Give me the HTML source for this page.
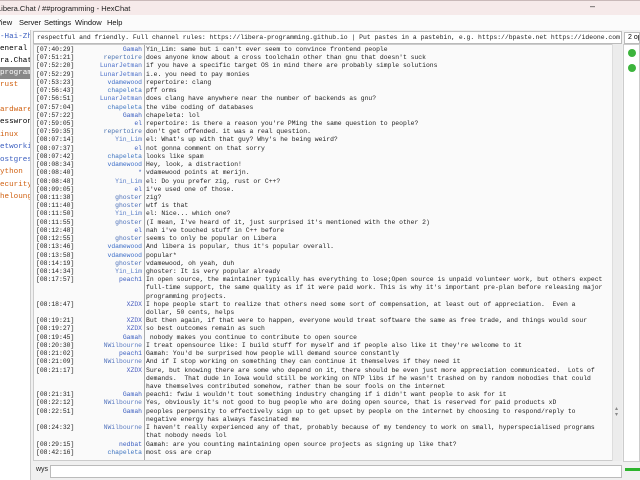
<!DOCTYPE html>
<html><head><meta charset="utf-8"><style>
*{margin:0;padding:0;box-sizing:border-box}
body{width:640px;height:480px;overflow:hidden;background:#f0f0f0;font-family:"Liberation Sans",sans-serif;position:relative}
.title{position:absolute;left:0;top:0;width:640px;height:15px;background:#f6eaea;font-size:7.5px;line-height:15px;color:#222;border-top:1px solid #c9b9b9;white-space:nowrap}
.menu{position:absolute;left:0;top:15px;width:640px;height:15px;background:#fbfbfb;font-size:7.5px;line-height:15px;color:#111}
.mi{position:absolute;top:0;display:block;white-space:nowrap}
.tree{position:absolute;left:0;top:30px;width:31px;height:450px;background:#fff;border-right:1px solid #ccc;font-family:"Liberation Mono",monospace;font-size:7.6px;overflow:hidden}
.tree div{position:absolute;left:0;white-space:nowrap;height:12px;line-height:12px}
.topic{position:absolute;left:33px;top:31px;width:589px;height:13px;background:#fff;border:1px solid #bbb;font-family:"Liberation Mono",monospace;font-size:6.4px;line-height:12px;white-space:nowrap;overflow:hidden;padding-left:3px;color:#222}
.chat{position:absolute;left:33px;top:44px;width:580px;height:417px;background:#fafafa;border:1px solid #ccc;overflow:hidden}
.sb{position:absolute;left:612px;top:44px;width:10px;height:417px;background:#ececec;border-left:1px solid #ddd}
.sep{position:absolute;left:144px;top:45px;width:1px;height:415px;background:#aaa}
.rows{position:absolute;left:0;top:46px;font-family:"Liberation Mono",monospace;font-size:6.4px;color:#222}
.r{position:absolute;height:8px;line-height:8px;white-space:pre}
.t{left:36px}
.m{left:146px}
.users{position:absolute;left:623px;top:44px;width:17px;height:418px;background:#fff;border:1px solid #ccc}
.inp{position:absolute;left:50px;top:465px;width:572px;height:13px;background:#fff;border:1px solid #bbb}
</style></head><body>
<div class="title"><span style="position:absolute;left:-3px">Libera.Chat / ##programming - HexChat</span><span style="position:absolute;left:590px;top:-2px;font-size:9px">–</span></div>
<div class="menu"><span class="mi" style="left:-4px">View</span><span class="mi" style="left:19px">Server</span><span class="mi" style="left:44px">Settings</span><span class="mi" style="left:75px">Window</span><span class="mi" style="left:107px">Help</span></div>
<div class="tree">
<div style="top:1px;color:#3a5dbf">-Hai-Zhan</div>
<div style="top:13px">eneral</div>
<div style="top:25px">ra.Chat</div>
<div style="top:37px;background:#888;color:#fff;width:31px">programm</div>
<div style="top:49px;color:#d06010">rust</div>
<div style="top:74px;color:#d06010">ardware</div>
<div style="top:86px">esswrong</div>
<div style="top:99px;color:#d06010">inux</div>
<div style="top:111px;color:#3a5dbf">etworkin</div>
<div style="top:124px;color:#3a5dbf">ostgresq</div>
<div style="top:136px;color:#d06010">ython</div>
<div style="top:149px;color:#d06010">ecurity</div>
<div style="top:161px;color:#d06010">helounge</div>
</div>
<div class="topic">respectful and friendly. Full channel rules: https://libera-programming.github.io | Put pastes in a pastebin, e.g. https://bpaste.net https://ideone.com</div>
<div style="position:absolute;left:624px;top:32px;width:16px;height:12px;background:#fff;border:1px solid #bbb;font-size:7px;line-height:10px;padding-left:3px;overflow:hidden;white-space:nowrap">2 op</div>
<div class="chat"></div>
<div class="sb"><div style="position:absolute;left:2px;top:362px;font-size:6px;color:#888;line-height:6px">▴<br>▾</div></div>
<div class="sep"></div>
<div class="users">
<div style="position:absolute;left:4px;top:4px;width:8px;height:8px;border-radius:50%;background:#3cb43c"></div>
<div style="position:absolute;left:4px;top:19px;width:8px;height:8px;border-radius:50%;background:#3cb43c"></div>
</div>
<div style="position:absolute;left:625px;top:468px;width:15px;height:3px;background:#2db42d"></div>
<div style="position:absolute;left:36px;top:466px;font-size:7px;color:#222">wys</div>
<div class="inp"></div>
<div class="rows" id="rows"></div>
<script>
var L=[
["07:40:29","Gamah","Yin_Lim: same but i can't ever seem to convince frontend people"],
["07:51:21","repertoire","does anyone know about a cross toolchain other than gnu that doesn't suck"],
["07:52:20","LunarJetman","if you have a specific target OS in mind there are probably simple solutions"],
["07:52:29","LunarJetman","i.e. you need to pay monies"],
["07:53:23","vdamewood","repertoire: clang"],
["07:56:43","chapeleta","pff orms"],
["07:56:51","LunarJetman","does clang have anywhere near the number of backends as gnu?"],
["07:57:04","chapeleta","the vibe coding of databases"],
["07:57:22","Gamah","chapeleta: lol"],
["07:59:05","el","repertoire: is there a reason you're PMing the same question to people?"],
["07:59:35","repertoire","don't get offended. it was a real question."],
["08:07:14","Yin_Lim","el: What's up with that guy? Why's he being weird?"],
["08:07:37","el","not gonna comment on that sorry"],
["08:07:42","chapeleta","looks like spam"],
["08:08:34","vdamewood","Hey, look, a distraction!"],
["08:08:40","*","vdamewood points at merijn."],
["08:08:48","Yin_Lim","el: Do you prefer zig, rust or C++?"],
["08:09:05","el","i've used one of those."],
["08:11:38","ghoster","zig?"],
["08:11:40","ghoster","wtf is that"],
["08:11:50","Yin_Lim","el: Nice... which one?"],
["08:11:55","ghoster","(I mean, I've heard of it, just surprised it's mentioned with the other 2)"],
["08:12:48","el","nah i've touched stuff in C++ before"],
["08:12:55","ghoster","seems to only be popular on Libera"],
["08:13:46","vdamewood","And libera is popular, thus it's popular overall."],
["08:13:58","vdamewood","popular*"],
["08:14:19","ghoster","vdamewood, oh yeah, duh"],
["08:14:34","Yin_Lim","ghoster: It is very popular already"],
["08:17:57","peach1","In open source, the maintainer typically has everything to lose;Open source is unpaid volunteer work, but others expect"],
["","","full-time support, the same quality as if it were paid work. This is why it's important pre-plan before releasing major"],
["","","programming projects."],
["08:18:47","XZDX","I hope people start to realize that others need some sort of compensation, at least out of appreciation.  Even a"],
["","","dollar, 50 cents, helps"],
["08:19:21","XZDX","But then again, if that were to happen, everyone would treat software the same as free trade, and things would sour"],
["08:19:27","XZDX","so best outcomes remain as such"],
["08:19:45","Gamah"," nobody makes you continue to contribute to open source"],
["08:20:30","NWilbourne","I treat opensource like: I build stuff for myself and if people also like it they're welcome to it"],
["08:21:02","peach1","Gamah: You'd be surprised how people will demand source constantly"],
["08:21:09","NWilbourne","And if I stop working on something they can continue it themselves if they need it"],
["08:21:17","XZDX","Sure, but knowing there are some who depend on it, there should be even just more appreciation communicated.  Lots of"],
["","","demands.  That dude in Iowa would still be working on NTP libs if he wasn't trashed on by random nobodies that could"],
["","","have themselves contributed somehow, rather than be sour fools on the internet"],
["08:21:31","Gamah","peach1: fwiw i wouldn't tout something industry changing if i didn't want people to ask for it"],
["08:22:12","NWilbourne","Yes, obviously it's not good to bug people who are doing open source, that is reserved for paid products xD"],
["08:22:51","Gamah","peoples perpensity to effectively sign up to get upset by people on the internet by choosing to respond/reply to"],
["","","negative energy has always fascinated me"],
["08:24:32","NWilbourne","I haven't really experienced any of that, probably because of my tendency to work on small, hyperspecialised programs"],
["","","that nobody needs lol"],
["08:29:15","nedbat","Gamah: are you counting maintaining open source projects as signing up like that?"],
["08:42:16","chapeleta","most oss are crap"]];
var C={"Gamah":"#3a5dbf","repertoire":"#4a72b0","LunarJetman":"#4a6ec8","vdamewood":"#3d6ec8","chapeleta":"#3d74c0","el":"#3a5dbf","Yin_Lim":"#5a7ec8","*":"#3a5dbf","ghoster":"#4a6eb8","peach1":"#3a5dbf","XZDX":"#4a5ec0","NWilbourne":"#5a7ac0","nedbat":"#3a5dbf"};
var h="",y=0;
L.forEach(function(l){
if(l[0])h+='<div class="r t" style="top:'+y+'px">['+l[0]+']</div>';
if(l[1])h+='<div class="r" style="top:'+y+'px;left:62px;width:80px;text-align:right;color:'+C[l[1]]+'">'+l[1]+'</div>';
h+='<div class="r m" style="top:'+y+'px">'+l[2].replace(/</g,"&lt;")+'</div>';
y+=8.22;});
document.getElementById("rows").innerHTML=h;
</script>
</body></html>
